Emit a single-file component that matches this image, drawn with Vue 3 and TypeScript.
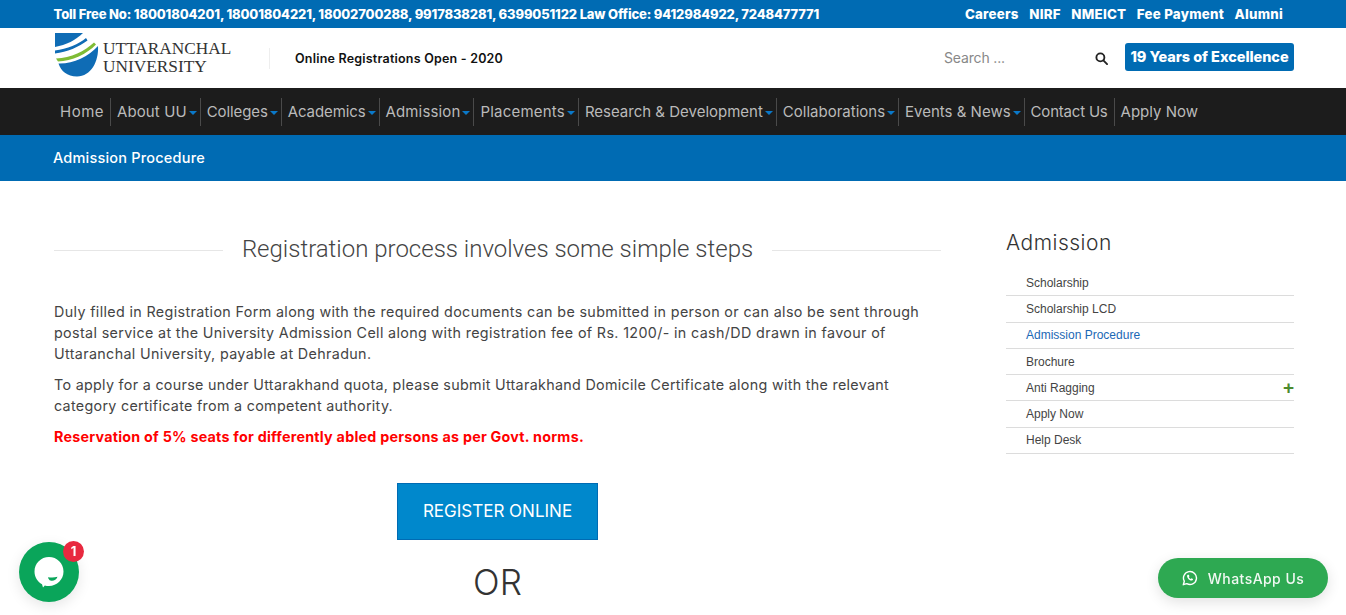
<script setup lang="ts">
interface NavItem { label: string; caret: boolean }
const navItems: NavItem[] = [
  { label: 'Home', caret: false },
  { label: 'About UU', caret: true },
  { label: 'Colleges', caret: true },
  { label: 'Academics', caret: true },
  { label: 'Admission', caret: true },
  { label: 'Placements', caret: true },
  { label: 'Research & Development', caret: true },
  { label: 'Collaborations', caret: true },
  { label: 'Events & News', caret: true },
  { label: 'Contact Us', caret: false },
  { label: 'Apply Now', caret: false },
]
const topLinks = ['Careers', 'NIRF', 'NMEICT', 'Fee Payment', 'Alumni']
const sideLinks = ['Scholarship', 'Scholarship LCD', 'Admission Procedure', 'Brochure', 'Anti Ragging', 'Apply Now', 'Help Desk']
</script>

<template>
  <div class="page">
    <div class="topbar">
      <div class="toll">Toll Free No: 18001804201, 18001804221, 18002700288, 9917838281, 6399051122 Law Office: 9412984922, 7248477771</div>
      <div class="toplinks"><a v-for="l in topLinks" :key="l">{{ l }}</a></div>
    </div>

    <header class="header">
      <div class="logo">
        <svg width="46" height="44" viewBox="0 0 46 44">
          <path d="M0 0H28C21 7 11 12 0 14Z" fill="#0f6cb5" />
          <path d="M0 17.500C12 16 24 11 31 5L32.500 7.500C24 14 12 19 0 20.500Z" fill="#0f6cb5" />
          <path d="M1 25.500C16 25 30 18 39 9.500L41 11.500C32 21 17 28 3 28.500Z" fill="#7fbc35" />
          <path d="M3.500 30.500C18 31 33 24 43 13C44 28 36 43.500 22 43.500C12 43.500 6 38 3.500 30.500Z" fill="#0f6cb5" />
        </svg>
        <div class="logo-text"><span>UTTARANCHAL</span><span>UNIVERSITY</span></div>
      </div>
      <div class="tagline">Online Registrations Open - 2020</div>
      <div class="search">
        <span class="search-ph">Search ...</span>
        <svg class="search-icon" width="13" height="13" viewBox="0 0 14 14" fill="none" stroke="#222" stroke-width="2">
          <circle cx="5.800" cy="5.800" r="4.300" /><path d="M9 9l4 4" stroke-linecap="round" />
        </svg>
      </div>
      <div class="years">19 Years of Excellence</div>
    </header>

    <nav class="nav">
      <a v-for="item in navItems" :key="item.label" class="nav-item">
        <span class="nav-label">{{ item.label }}</span><i v-if="item.caret" class="caret"></i>
      </a>
    </nav>

    <div class="crumb">Admission Procedure</div>

    <main class="content">
      <section class="left">
        <div class="title-row">
          <span class="line"></span>
          <h1>Registration process involves some simple steps</h1>
          <span class="line"></span>
        </div>
        <p class="first">Duly filled in Registration Form along with the required documents can be submitted in person or can also be sent through postal service at the University Admission Cell along with registration fee of Rs. 1200/- in cash/DD drawn in favour of Uttaranchal University, payable at Dehradun.</p>
        <p>To apply for a course under Uttarakhand quota, please submit Uttarakhand Domicile Certificate along with the relevant category certificate from a competent authority.</p>
        <p class="red">Reservation of 5% seats for differently abled persons as per Govt. norms.</p>
        <div class="cta"><a class="register">REGISTER ONLINE</a></div>
        <div class="or">OR</div>
      </section>
      <aside class="side">
        <h2>Admission</h2>
        <ul>
          <li v-for="l in sideLinks" :key="l" :class="{ active: l === 'Admission Procedure' }">
            {{ l }}<span v-if="l === 'Anti Ragging'" class="plus">+</span>
          </li>
        </ul>
      </aside>
    </main>

    <div class="chat">
      <svg width="30" height="32" viewBox="0 0 30 32">
        <path d="M15 1C23 1 29.500 7.300 29.500 15.500C29.500 23.500 23 30 15 30C13.500 30 12 29.800 10.800 29.400L9 31.500L8 28.300C3.500 25.800 .5 21 .5 15.500C.5 7.300 7 1 15 1Z" fill="#fff" />
        <path d="M14 21.200C17 21.800 20.500 21.800 23.500 20.800C22.500 24 19 25.500 16.500 24.600C15.200 24.100 14.400 22.800 14 21.200Z" fill="#0aa55a" />
      </svg>
      <span class="badge">1</span>
    </div>

    <a class="whatsapp">
      <svg width="16" height="16" viewBox="0 0 16 16" fill="none" stroke="#fff" stroke-width="1.400">
        <path d="M1.300 14.700l1-3.500A6.500 6.500 0 1 1 4.800 13.700Z" stroke-linejoin="round" />
        <path d="M5.600 4.800c-.9.800-.7 2.200.4 3.600 1.200 1.500 2.800 2.500 4 2.100.8-.3 1.100-1 1-1.500L9.500 8.200l-.8.800C7.800 8.600 7.200 8 6.800 7l.7-.8-.7-1.500Z" fill="#fff" stroke="none" />
      </svg>
      WhatsApp Us
    </a>
  </div>
</template>

<style>
html, body { margin: 0; overflow: hidden; }
</style>

<style scoped>
.page {
  width: 1346px;
  height: 615px;
  overflow: hidden;
  position: relative;
  font-family: Inter, "Open Sans", sans-serif;
  color: #3a3a3a;
  background: #fff;
}
.topbar {
  height: 28px;
  background: #006bb3;
  color: #fff;
  font-size: 13px;
  font-weight: 800;
  display: flex;
  align-items: center;
  justify-content: space-between;
  padding: 0 63px 0 53.500px;
}
.toll { letter-spacing: -0.150px; white-space: nowrap; }
.toplinks { display: flex; gap: 10.500px; font-size: 13.300px; letter-spacing: 0.250px; }
.header {
  height: 60px;
  display: flex;
  align-items: center;
  padding: 0 52px 0 55px;
}
.logo { display: flex; align-items: center; width: 214px; height: 60px; }
.logo svg { margin-top: -6px; flex: none; }
.logo-text {
  display: flex;
  flex-direction: column;
  font-family: "Liberation Serif", serif;
  font-size: 17.300px;
  line-height: 18px;
  color: #333;
  margin-left: 2px;
  margin-top: -1px;
  white-space: nowrap;
}
.tagline {
  font-size: 12.500px;
  font-weight: 600;
  letter-spacing: 0.210px;
  color: #111;
  border-left: 1px solid #eee;
  height: 21px;
  line-height: 21px;
  padding-left: 25px;
  white-space: nowrap;
}
.search {
  margin-left: auto;
  width: 164px;
  display: flex;
  align-items: center;
  justify-content: space-between;
  margin-right: 17px;
  margin-top: -1px;
  font-size: 14px;
  letter-spacing: -0.150px;
  color: #888;
}
.search-icon { margin-top: 2px; }
.years {
  width: 169px;
  height: 28px;
  background: #006bb3;
  color: #fff;
  font-size: 14.500px;
  font-weight: 800;
  letter-spacing: -0.050px;
  border-radius: 3px;
  text-align: center;
  line-height: 27px;
  white-space: nowrap;
  margin-top: -3px;
}
.nav {
  height: 47px;
  background: #1c1c1c;
  display: flex;
  align-items: center;
  padding-left: 54px;
}
.nav-item {
  display: flex;
  align-items: center;
  height: 28px;
  padding: 0 6px;
  font-size: 15px;
  color: #bababa;
  border-right: 1px solid #4a4a4a;
  white-space: nowrap;
}
.nav-label { margin-top: -1px; }
.nav-item:nth-child(1) .nav-label { letter-spacing: 0.500px; }
.nav-item:nth-child(2) .nav-label { letter-spacing: 0.100px; }
.nav-item:nth-child(3) .nav-label { letter-spacing: -0.100px; }
.nav-item:nth-child(4) .nav-label { letter-spacing: -0.100px; }
.nav-item:nth-child(5) .nav-label { letter-spacing: 0.150px; }
.nav-item:nth-child(6) .nav-label { letter-spacing: 0.200px; }
.nav-item:nth-child(10) .nav-label { letter-spacing: -0.200px; }
.nav-item:last-child { border-right: 0; }
.caret {
  width: 0;
  height: 0;
  margin: 2px -3px 0 2px;
  border-left: 4px solid transparent;
  border-right: 4px solid transparent;
  border-top: 4px solid #0a78c8;
}
.crumb {
  height: 46px;
  background: #006bb3;
  color: #fff;
  font-size: 14.500px;
  font-weight: 500;
  letter-spacing: 0.200px;
  line-height: 46px;
  padding-left: 53px;
}
.content {
  display: flex;
  padding: 0 52px 0 54px;
  justify-content: space-between;
}
.left { width: 887px; }
.title-row {
  display: flex;
  align-items: center;
  margin-top: 53px;
  height: 30px;
}
.title-row h1 {
  margin: 0;
  padding: 0 19px;
  font-family: Roboto, sans-serif;
  font-size: 24px;
  font-weight: 300;
  white-space: nowrap;
  color: #444;
}
.line { flex: 1; height: 1px; margin-top: 2px; background: #e6e6e6; }
.left p {
  margin: 0 0 10px;
  font-size: 14.300px;
  letter-spacing: 0.310px;
  line-height: 21px;
  color: #444;
}
.left p.first { margin-top: 37px; letter-spacing: 0.360px; }
.left p.red { color: #f00; font-weight: 700; letter-spacing: 0.240px; }
.cta { display: flex; justify-content: center; margin-top: 36px; }
.register {
  width: 201px;
  height: 57px;
  box-sizing: border-box;
  background: #0088cc;
  border: 1px solid #006bb3;
  color: #fff;
  font-size: 17px;
  text-align: center;
  line-height: 55px;
}
.or { text-align: center; font-size: 35px; font-weight: 300; margin-top: 21px; color: #333; }
.side { width: 288px; }
.side h2 { margin: 48px 0 0; font-size: 21px; font-weight: 300; letter-spacing: 0.500px; line-height: 28px; color: #333; }
.side ul { list-style: none; margin: 13px 0 0; padding: 0; }
.side li {
  height: 26.300px;
  box-sizing: border-box;
  border-bottom: 1px solid #dcdcdc;
  padding-left: 20px;
  font-family: "Liberation Sans", sans-serif;
  font-size: 12px;
  line-height: 26px;
  color: #444;
  display: flex;
  justify-content: space-between;
  align-items: center;
}
.side li.active { color: #1b68b5; }
.plus { color: #4d8a2e; font-size: 19px; font-weight: 700; line-height: 20px; }
.chat {
  position: fixed;
  left: 19px;
  top: 542px;
  width: 60px;
  height: 60px;
  border-radius: 50%;
  background: #0aa55a;
  display: flex;
  align-items: center;
  justify-content: center;
  box-shadow: 0 4px 14px rgba(0, 0, 0, 0.1);
}
.badge {
  position: absolute;
  right: -5px;
  top: -1px;
  width: 21px;
  height: 21px;
  border-radius: 50%;
  background: #e8293f;
  color: #fff;
  font-size: 13px;
  font-weight: 700;
  text-align: center;
  line-height: 21px;
}
.whatsapp {
  position: fixed;
  left: 1158px;
  top: 558px;
  width: 170px;
  height: 40px;
  border-radius: 20px;
  background: #2ea952;
  color: #f0f8f2;
  font-size: 14px;
  font-weight: 500;
  letter-spacing: 0.450px;
  display: flex;
  align-items: center;
  justify-content: center;
  gap: 10px;
  box-shadow: 0 4px 14px rgba(0, 0, 0, 0.12);
}
</style>
